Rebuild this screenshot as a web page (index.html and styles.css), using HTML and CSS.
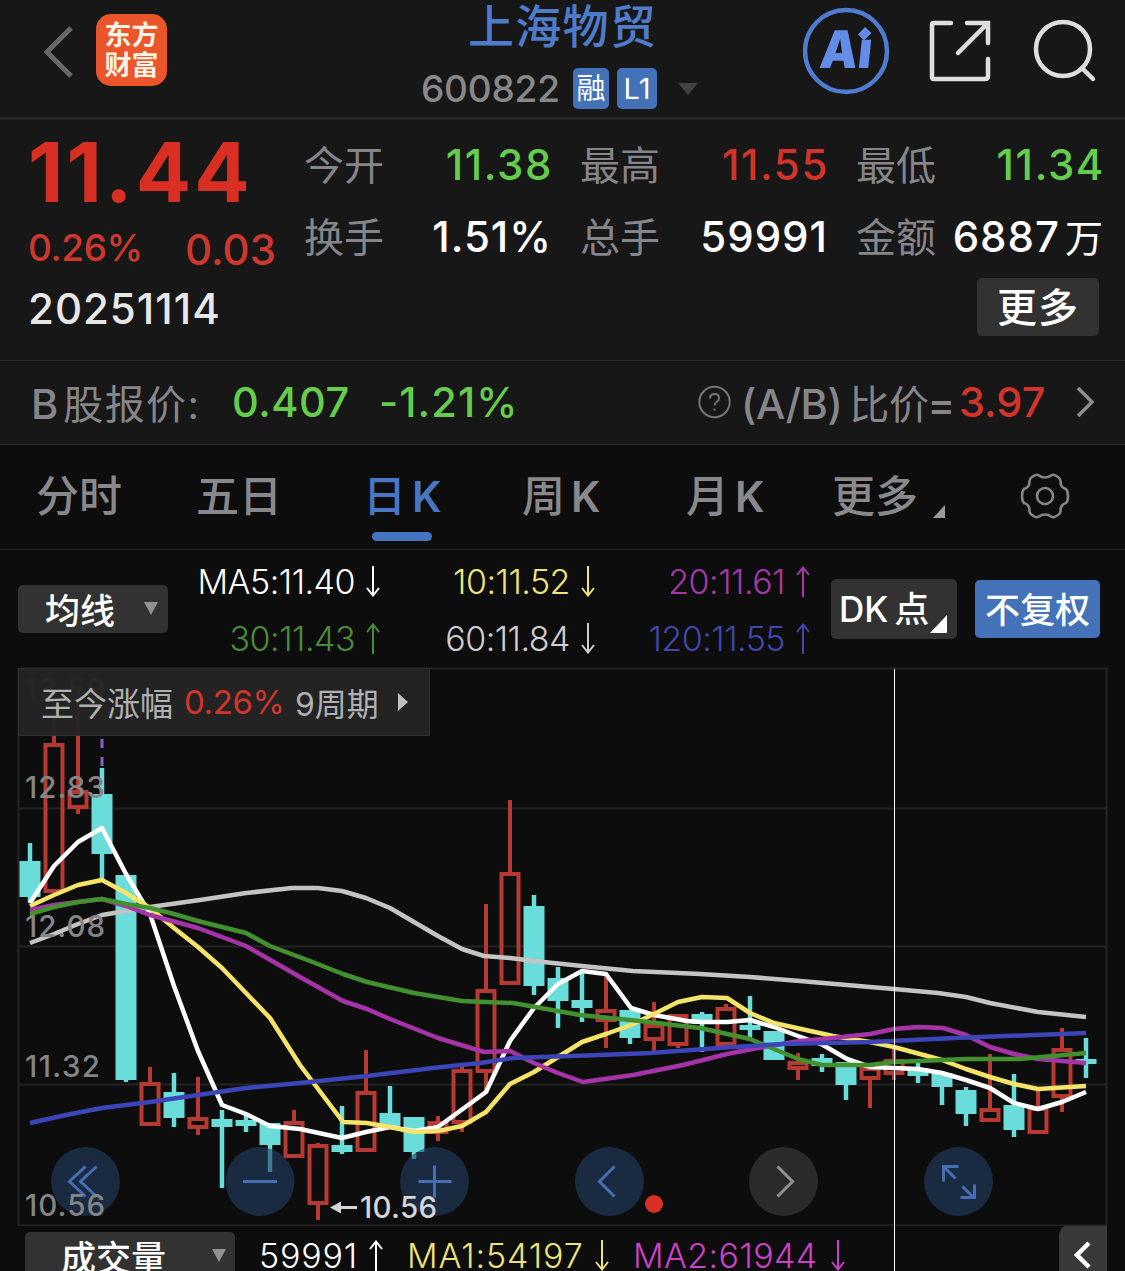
FILE: index.html
```html
<!DOCTYPE html>
<html lang="zh-CN">
<head>
<meta charset="utf-8">
<title>上海物贸 600822</title>
<link rel="stylesheet" href="styles.css">
</head>
<body>
<header class="topbar">
  <div class="topbar-left">
    <svg class="back" width="30" height="54" viewBox="0 0 30 54"><path d="M27 3 3 27 27 51"/></svg>
    <div class="logo"><span>东方</span><span>财富</span></div>
  </div>
  <div class="stock">
    <h1 class="stock-name">上海物贸</h1>
    <div class="stock-meta">
      <span class="stock-code">600822</span>
      <span class="badge badge-rong">融</span>
      <span class="badge badge-l1">L1</span>
      <svg class="meta-caret" width="20" height="12" viewBox="0 0 20 12"><path d="M0 0h20L10 12z"/></svg>
    </div>
  </div>
  <div class="topbar-right">
    <svg width="88" height="88" viewBox="0 0 88 88">
      <circle cx="43" cy="44" r="41" fill="none" stroke="#4f7cd0" stroke-width="4.5"/>
      <text class="ai-text" transform="translate(15.500 61) skewX(-6)" textLength="52" lengthAdjust="spacingAndGlyphs">Aı</text>
      <path d="M62 20 68.500 26 61 33.500 55 27.500z" fill="#638ce6"/>
    </svg>
    <svg class="share" width="62" height="62" viewBox="0 0 62 62"><path d="M22 3H5Q3 3 3 5V57Q3 59 5 59H56Q59 59 59 56V39M38 3H59V23M58 4 29 33"/></svg>
    <svg class="search" width="64" height="64" viewBox="0 0 64 64"><circle cx="30" cy="30" r="27"/><path d="M49 49 60 60"/></svg>
  </div>
</header>

<section class="quote">
  <div class="price-block">
    <div class="price">11.44</div>
    <div class="change"><span class="pct">0.26%</span><span class="diff">0.03</span></div>
  </div>
  <dl class="stats">
    <div><dt>今开</dt><dd class="green wide">11.38</dd></div>
    <div><dt>最高</dt><dd class="red wide">11.55</dd></div>
    <div><dt>最低</dt><dd class="green wide">11.34</dd></div>
    <div><dt>换手</dt><dd>1.51%</dd></div>
    <div><dt>总手</dt><dd>59991</dd></div>
    <div><dt>金额</dt><dd class="amount">6887<i>万</i></dd></div>
  </dl>
  <div class="date">20251114</div>
  <button class="more">更多</button>
</section>

<section class="bshare">
  <span class="b-label">B<i>股报价:</i></span>
  <span class="b-price green">0.407</span>
  <span class="b-pct green">-1.21%</span>
  <svg class="help" width="33" height="34" viewBox="0 0 33 34"><circle cx="16.500" cy="17" r="15.200"/><path d="M12 13.500Q12 9 16.500 9T21 13.200Q21 15.500 18.500 17 16.500 18.300 16.500 20.500M16.500 23.500V25.500"/></svg>
  <span class="ratio">(A/B)<i>比价</i><b>=</b></span><span class="ratio-value red">3.97</span>
  <svg class="go" width="18" height="32" viewBox="0 0 18 32"><path d="M2 2 16 16 2 30"/></svg>
</section>

<nav class="tabs">
  <span class="tab t1">分时</span>
  <span class="tab t2">五日</span>
  <span class="tab t3 active">日<b>K</b></span>
  <span class="tab t4">周<b>K</b></span>
  <span class="tab t5">月<b>K</b></span>
  <span class="tab t6">更多<svg class="corner" width="12" height="13" viewBox="0 0 12 13"><path d="M12 0V13H0z"/></svg></span>
  <svg class="gear" width="50" height="46" viewBox="0 0 50 46"><path d="M19 2.500Q21.500 4.500 25 4.500T31 2.500Q33 1 35.500 2.500L38 4Q41 6 40.500 9 40.500 12.500 43 14.500 44.500 15.500 46 16 48 18 48 23T46 30Q44 30.500 42.500 32 40.500 34 40.500 37 41 40 38 42L35.500 43.500Q33 45 31 43.500 28.500 41.500 25 41.500T19 43.500Q17 45 14.500 43.500L12 42Q9 40 9.500 37 9.500 34 7.500 32 6 30.500 4 30 2 28 2 23T4 16Q5.500 15.500 7 14.500 9.500 12.500 9.500 9 9 6 12 4L14.500 2.500Q17 1 19 2.500Z"/><circle cx="25" cy="23" r="8"/></svg>
</nav>

<section class="ma">
  <div class="select ma-select">均线<svg width="14" height="13" viewBox="0 0 14 13"><path d="M0 0h14L7 13z"/></svg></div>
  <div class="ma-grid">
    <span class="c-white">MA5:11.40<svg class="arr" viewBox="0 0 14 31"><path d="M7 0V29M1 22 7 29.500 13 22"/></svg></span>
    <span class="c-yellow">10:11.52<svg class="arr" viewBox="0 0 14 31"><path d="M7 0V29M1 22 7 29.500 13 22"/></svg></span>
    <span class="c-purple">20:11.61<svg class="arr" viewBox="0 0 14 31"><path d="M7 31V2M1 9 7 1.500 13 9"/></svg></span>
    <span class="c-green">30:11.43<svg class="arr" viewBox="0 0 14 31"><path d="M7 31V2M1 9 7 1.500 13 9"/></svg></span>
    <span class="c-grey">60:11.84<svg class="arr" viewBox="0 0 14 31"><path d="M7 0V29M1 22 7 29.500 13 22"/></svg></span>
    <span class="c-blue">120:11.55<svg class="arr" viewBox="0 0 14 31"><path d="M7 31V2M1 9 7 1.500 13 9"/></svg></span>
  </div>
  <button class="dk">DK<i>点</i><svg width="17" height="18" viewBox="0 0 17 18"><path d="M17 0V18H0z"/></svg></button>
  <button class="adjust">不复权</button>
</section>

<section class="chart">
  <svg class="kline" width="1125" height="559" viewBox="0 667 1125 559">
    <g class="grid"><path d="M19 668.500H1106.500V1225.500H18.500V668.500M19 808.500H1106M19 946.500H1106M19 1084.500H1106"/></g>
    <g class="axis"><text x="25" y="700" textLength="80">13.59</text></g>
    <path d="M102 739V748M102 757V766" stroke="#8560c8" stroke-width="3"/>
    <g id="candles"></g>
    <g class="lines">
      <polyline stroke="#c4c4c4" points="30,943 54,934 78,924 102,915 150,907 200,900 246,893 292,888 318,888 342,891 366,898 390,908 414,922 438,936 462,949 484,956 510,958 534,961 582,966 633,971 700,974 750,977 800,981 870,987 894,989 938,993 966,997 990,1003 1038,1012 1086,1017"/>
      <polyline stroke="#ffffff" points="30,903 54,866 78,842 102,828 126,874 150,914 174,986 198,1051 222,1105 246,1114 270,1126 300,1129 342,1138 366,1132 390,1127 414,1131 438,1127 486,1092 510,1041 534,1008 558,984 582,971 606,974 631,1008 654,1015 687,1021 702,1022 727,1022 750,1020 774,1027 798,1036 823,1045 847,1059 870,1067 894,1068 918,1069 942,1073 966,1080 990,1088 1014,1103 1038,1109 1062,1102 1086,1092"/>
      <polyline stroke="#f6e46a" points="30,906 54,895 78,885 102,880 126,893 150,908 174,928 198,947 222,968 246,993 270,1018 300,1065 343,1122 367,1123 390,1127 414,1132 438,1131 462,1126 486,1112 510,1084 534,1072 558,1057 582,1042 606,1034 631,1025 654,1014 678,1002 702,997 727,998 750,1013 774,1023 833,1036 870,1042 894,1047 942,1060 966,1069 990,1077 1014,1084 1038,1089 1086,1086"/>
      <polyline stroke="#a633a8" points="30,910 54,905 78,902 102,899 126,906 150,915 198,928 246,946 300,977 343,1001 367,1009 390,1019 438,1038 484,1052 510,1051 534,1063 558,1073 583,1082 633,1075 683,1065 727,1054 763,1047 800,1041 833,1038 870,1034 894,1029 918,1027 943,1028 966,1035 990,1047 1014,1054 1038,1059 1062,1061 1086,1063"/>
      <polyline stroke="#43902f" points="30,914 54,907 78,902 102,899 126,904 150,908 174,914 198,921 246,933 270,946 310,961 343,974 367,982 414,993 462,1001 513,1003 580,1015 640,1021 700,1028 750,1039 774,1049 798,1059 822,1065 870,1065 894,1062 966,1059 1020,1059 1086,1053"/>
      <polyline stroke="#3c45b8" points="30,1123 66,1115 102,1108 150,1102 198,1095 246,1088 300,1083 367,1076 433,1068 480,1063 513,1058 600,1055 650,1053 733,1047 783,1044 870,1042 955,1038 1086,1033"/>
    </g>
    <g class="tools">
      <g transform="translate(85.500 1181.500)"><circle r="34.500"/><path d="M0 -15 -16 0 0 15M11 -15 -5 0 11 15"/></g>
      <g transform="translate(260 1181.500)"><circle r="34.500"/><path d="M-17 0H17"/></g>
      <g transform="translate(434.500 1181.500)"><circle r="34.500"/><path d="M-16 0H17M0 -16V16"/></g>
      <g transform="translate(609.500 1181.500)"><circle r="34.500"/><path d="M5 -15 -10 0 5 15"/></g>
      <g class="off" transform="translate(783.500 1181.500)"><circle r="34.500"/><path d="M-6 -15 9 0 -6 15"/></g>
      <g transform="translate(958.500 1181.500)"><circle r="34.500"/><path d="M-15 0V-15H0M-14 -14 -3 -3M4 5 15 16M16 3V16H2"/></g>
    </g>
    <circle cx="654" cy="1204" r="9" fill="#d93025"/>
    <g class="axis">
      <text x="25" y="798" textLength="80">12.83</text>
      <text x="25" y="937" textLength="80">12.08</text>
      <text x="25" y="1076.500" textLength="75">11.32</text>
      <text x="25" y="1215.500" textLength="80">10.56</text>
    </g>
    <path d="M340 1207.500H357" stroke="#d4d4da" stroke-width="3"/><path d="M330 1207.500 341 1201.500V1213.500z" fill="#d4d4da"/>
    <text class="low" x="360" y="1218" textLength="77">10.56</text>
  </svg>
  <div class="since"><span>至今涨幅</span><em>0.26%</em><span class="period">9周期</span><svg width="10" height="18" viewBox="0 0 10 18"><path d="M0 0 10 9 0 18z"/></svg></div>
  <div class="crosshair"></div>
</section>

<footer class="volume">
  <div class="select vol-select">成交量<svg width="14" height="13" viewBox="0 0 14 13"><path d="M0 0h14L7 13z"/></svg></div>
  <span class="v1">59991</span><svg class="arr c-white" viewBox="0 0 14 31"><path d="M7 31V2M1 9 7 1.500 13 9"/></svg>
  <span class="v2 c-yellow">MA1:54197</span><svg class="arr c-yellow" viewBox="0 0 14 31"><path d="M7 0V29M1 22 7 29.500 13 22"/></svg>
  <span class="v3 c-magenta">MA2:61944</span><svg class="arr c-magenta" viewBox="0 0 14 31"><path d="M7 0V29M1 22 7 29.500 13 22"/></svg>
  <div class="collapse"><svg width="18" height="28" viewBox="0 0 18 28"><path d="M15 2 3 14 15 26"/></svg></div>
</footer>
<script src="chart.js"></script>
</body>
</html>
```
FILE: styles.css
```css
* { box-sizing: border-box; }
body {
  margin: 0;
  width: 1125px;
  height: 1271px;
  overflow: hidden;
  background: #0d0d0d;
  color: #fff;
  font-family: "Inter", "Noto Sans CJK SC", sans-serif;
  font-weight: 500;
}
i, em { font-style: normal; }
svg { display: block; flex: none; }
button { border: 0; padding: 0; font: inherit; color: inherit; }
.red { color: #d2342b; }
.green { color: #66cc4e; }

.topbar {
  height: 120px;
  background: #171717;
  border-bottom: 3px solid #252525;
  display: grid;
  grid-template-columns: 421px 382px 1fr;
}
.topbar-left { display: flex; align-items: flex-start; padding: 14px 0 0 44px; gap: 22px; }
.back { margin-top: 11px; fill: none; stroke: #68686a; stroke-width: 5; }
.logo {
  width: 71px; height: 72px; border-radius: 15px; background: #ea5529;
  display: flex; flex-direction: column; align-items: center; justify-content: center;
  padding-top: 1px;
  font-size: 27px; line-height: 30px; font-weight: 700; color: #fff2e4;
}
.stock-name {
  margin: 0 0 0 47px; height: 60px; font-size: 46px; line-height: 52px;
  font-weight: 500; letter-spacing: 1.300px; color: #4f7bcb;
}
.stock-meta { display: flex; align-items: center; height: 57px; }
.stock-code { width: 152px; font-size: 37px; letter-spacing: -.2px; color: #88888b; }
.badge {
  height: 41px; border-radius: 5px; background: #4372b8; font-size: 29px;
  line-height: 42px; text-align: center; font-weight: 400; margin-right: 8px;
}
.badge-rong { width: 36px; }
.badge-l1 { width: 40px; }
.meta-caret { margin-left: 13px; fill: #424242; }
.topbar-right { display: flex; align-items: flex-start; padding-top: 7px; }
.ai-text { font: 900 52px "Inter", sans-serif; fill: #638ce6; }
.share { margin: 13px 0 0 38px; fill: none; stroke: #dedede; stroke-width: 4.500; stroke-linecap: round; }
.search { margin: 12px 0 0 42px; fill: none; stroke: #dedede; stroke-width: 4.500; stroke-linecap: round; }

.quote {
  height: 241px; background: #171717; border-bottom: 1px solid #2b2b2b;
  display: grid; grid-template-columns: 304px 1fr; grid-template-rows: 158px 82px;
}
.price-block { padding: 5px 0 0 28px; }
.price { font-size: 82px; line-height: 96px; font-weight: 700; color: #d92f22; letter-spacing: 3.200px; }
.change { display: flex; align-items: center; height: 53px; color: #cd372e; }
.pct { width: 157px; font-size: 37px; letter-spacing: -.4px; }
.diff { font-size: 42px; padding-top: 4px; }
.stats {
  margin: 0; padding: 9px 22px 0 0; display: grid;
  grid-template-columns: 247px 247px 247px; column-gap: 29px; grid-template-rows: 72px 72px;
}
.stats div { display: flex; justify-content: space-between; align-items: center; line-height: 60px; }
.stats dt { font-size: 40px; color: #85858a; font-weight: 400; white-space: nowrap; padding-top: 1px; }
.stats dd { margin: 0 -1px 0 0; font-size: 42px; letter-spacing: 1px; white-space: nowrap; }
.stats dd.wide { letter-spacing: 1.600px; margin-right: -2px; }
.amount i { font-size: 38px; margin-left: 5px; font-weight: 400; }
.date { padding-left: 28px; font-size: 42px; line-height: 62px; letter-spacing: 1px; color: #e7e7e7; }
.more {
  width: 122px; height: 58px; border-radius: 5px; background: #323232;
  justify-self: end; margin-right: 26px; font-size: 40px; line-height: 60px; letter-spacing: 1px;
}

.bshare {
  height: 84px; background: #171717; border-bottom: 1px solid #2b2b2b;
  display: flex; align-items: center; padding: 0 0 1px 31px; font-size: 41.500px; white-space: nowrap;
}
.b-label { width: 201px; color: #86868a; }
.b-label i { font-weight: 400; margin-left: 5px; font-size: 40px; letter-spacing: 1.400px; }
.ratio i { font-weight: 400; margin-left: 7px; font-size: 40px; }
.ratio b { font-weight: 500; margin-left: -1px; }
.b-price { width: 147px; letter-spacing: .5px; }
.b-pct { width: 319px; letter-spacing: 1.100px; }
.help { margin-right: 10px; fill: none; stroke: #757578; stroke-width: 2; }
.ratio { width: 218px; color: #86868a; letter-spacing: -.4px; }
.ratio-value { width: 117px; }
.go { fill: none; stroke: #8d8d90; stroke-width: 3.500; }

.tabs {
  height: 105px; border-bottom: 1px solid #262626; background: #0d0d0d;
  display: flex; padding-left: 36px; font-size: 43px; line-height: 102px; color: #89898c;
}
.tab { position: relative; white-space: nowrap; }
.tab b { font-size: 42px; font-weight: 600; margin-left: 6px; }
.t1 { width: 160px; }
.t2 { width: 167px; }
.t3 { width: 159px; }
.t4 { width: 164px; }
.t5 { width: 146px; }
.t6 { width: 188px; display: flex; }
.corner { margin: 60px 0 0 15px; fill: #9a9a9c; }
.active { color: #4976c4; }
.active::after {
  content: ""; position: absolute; left: 9px; top: 87px;
  width: 60px; height: 9px; border-radius: 5px; background: #4474bd;
}
.gear { margin-top: 28px; fill: none; stroke: #858587; stroke-width: 2.600; }

.ma { height: 117px; display: flex; padding-left: 18px; }
.select { background: #323232; border-radius: 5px; display: flex; align-items: center; }
.select svg { fill: #919194; }
.ma-select { width: 150px; height: 48px; margin-top: 35px; padding: 0 0 2px 27px; font-size: 35px; gap: 29px; }
.ma-grid {
  width: 642px; height: 114px; padding-top: 3px; display: grid;
  grid-template-columns: 212px 215px 215px; grid-template-rows: 57px 57px;
  font-size: 34px; font-weight: 300; letter-spacing: -.5px;
}
.ma-grid span { display: flex; justify-content: flex-end; align-items: center; gap: 11px; }
.arr { width: 14px; height: 31px; fill: none; stroke: currentColor; stroke-width: 2; }
.c-white { color: #fff; }
.c-yellow { color: #efe477; }
.c-purple { color: #a33aa8; }
.c-green { color: #4a8c3b; }
.c-grey { color: #cfcfcf; }
.c-blue { color: #4147ac; }
.c-magenta { color: #cb42cb; }
.dk {
  width: 126px; height: 60px; margin: 29px 0 0 21px; border-radius: 5px; background: #323232;
  display: flex; padding-left: 8px; font-size: 35px; line-height: 61px;
}
.dk i { margin-left: 6px; font-size: 35px; }
.dk svg { margin: 36px 0 0 1px; fill: #fff; }
.adjust { width: 125px; height: 58px; margin: 30px 0 0 18px; border-radius: 5px; background: #4372b8; font-size: 35px; line-height: 60px; }

.chart { position: relative; height: 559px; }
.grid path { fill: none; stroke: #242424; stroke-width: 2; }
.lines polyline { fill: none; stroke-width: 4.500; stroke-linejoin: round; }
.axis text { font-size: 29.500px; fill: #858587; }
.low { font-size: 29.500px; fill: #d4d4da; }
.tools circle { fill: rgba(34, 62, 100, .6); }
.tools path { fill: none; stroke: #466eb5; stroke-width: 3; }
.tools .off circle { fill: #2a2a2b; }
.tools .off path { stroke: #919193; }
.up { fill: none; stroke: #b63a32; stroke-width: 4; }
.down { fill: #6adcda; stroke: none; }
.since {
  position: absolute; left: 18px; top: 1px; width: 412px; height: 68px;
  background: rgba(36, 36, 37, .97); border: 1px solid #303030;
  display: flex; align-items: center; padding: 0 0 1px 22px; font-size: 33px; font-weight: 400; color: #b0b0b2;
}
.since em { width: 111px; padding-left: 11px; color: #d2342b; letter-spacing: -.4px; }
.period { width: 98px; padding-left: 11px; font-size: 32px; }
.since svg { margin-left: 16px; width: 10px; fill: #c0c0c0; }
.since span { white-space: nowrap; }
.crosshair { position: absolute; left: 894px; top: 2px; width: 1px; height: 602px; background: #fff; }

.volume { height: 45px; display: flex; padding-left: 25px; font-size: 34px; font-weight: 300; line-height: 60px; white-space: nowrap; }
.vol-select { width: 210px; height: 52px; margin: 6px 25px 0 0; padding-left: 36px; font-size: 35px; font-weight: 500; line-height: 50px; gap: 46px; }
.vol-select svg { margin-top: -6px; }
.volume .arr { margin-top: 14px; }
.v1 { width: 110px; margin-left: -1px; letter-spacing: .8px; }
.v2 { width: 188px; margin-left: 24px; letter-spacing: .9px; }
.v3 { width: 198px; margin-left: 24px; letter-spacing: .4px; }
.collapse {
  width: 48px; height: 50px; margin: -1px 0 0 214px; border-radius: 10px 0 0 0; background: #39393a;
  padding: 16px 0 0 15px;
}
.collapse path { fill: none; stroke: #fff; stroke-width: 4.500; }
```
FILE: chart.js
```js
// [direction, wick top, body top, body bottom, wick bottom], one row per trading day
const days = [
  ["d",843,861,897,903],["u",690,743,893,893],["u",690,790,809,814],["d",768,794,854,880],
  ["d",875,875,1080,1082],["u",1067,1082,1126,1126],["d",1073,1092,1118,1127],["u",1077,1117,1129,1135],
  ["d",1110,1119,1127,1188],["d",1113,1120,1126,1132],["d",1123,1123,1145,1172],["u",1110,1121,1158,1158],
  ["u",1143,1144,1205,1220],["d",1106,1145,1152,1154],["u",1050,1091,1152,1152],["d",1086,1113,1126,1126],
  ["d",1117,1117,1152,1159],["u",1116,1121,1134,1141],["u",1066,1069,1124,1132],["u",904,989,1073,1090],
  ["u",800,872,985,985],["d",895,906,986,995],["d",967,978,1001,1028],["d",970,1000,1008,1022],
  ["u",972,1009,1022,1048],["d",1010,1010,1038,1044],["u",1002,1024,1041,1051],["u",1014,1014,1046,1048],
  ["d",1012,1014,1024,1052],["u",1004,1007,1046,1046],["d",996,1025,1030,1041],["d",1031,1031,1060,1060],
  ["u",1053,1061,1070,1080],["d",1054,1058,1066,1072],["d",1062,1062,1085,1100],["u",1067,1067,1080,1108],
  ["u",1047,1059,1075,1080],["d",1060,1068,1076,1083],["d",1073,1073,1087,1105],["d",1087,1090,1114,1126],
  ["u",1054,1108,1122,1122],["d",1074,1105,1130,1137],["u",1088,1107,1134,1134],["u",1028,1048,1098,1112],
  ["d",1038,1059,1064,1078]
];
const path = days.map(([dir, hi, top, bottom, lo], i) => {
  const x = 30 + i * 24;
  if (dir === "d") {
    return `<path class="down" d="M${x - 10.5} ${top}h21V${bottom}h-21zM${x - 2.25} ${hi}h4.5V${lo}h-4.500z"/>`;
  }
  const t = top + 2, b = bottom - 2;
  return `<path class="up" d="M${x - 8.5} ${t}h17V${b}h-17zM${x} ${hi}V${t}M${x} ${b}V${Math.max(lo, b)}"/>`;
}).join("");
document.getElementById("candles").innerHTML = path;
```
